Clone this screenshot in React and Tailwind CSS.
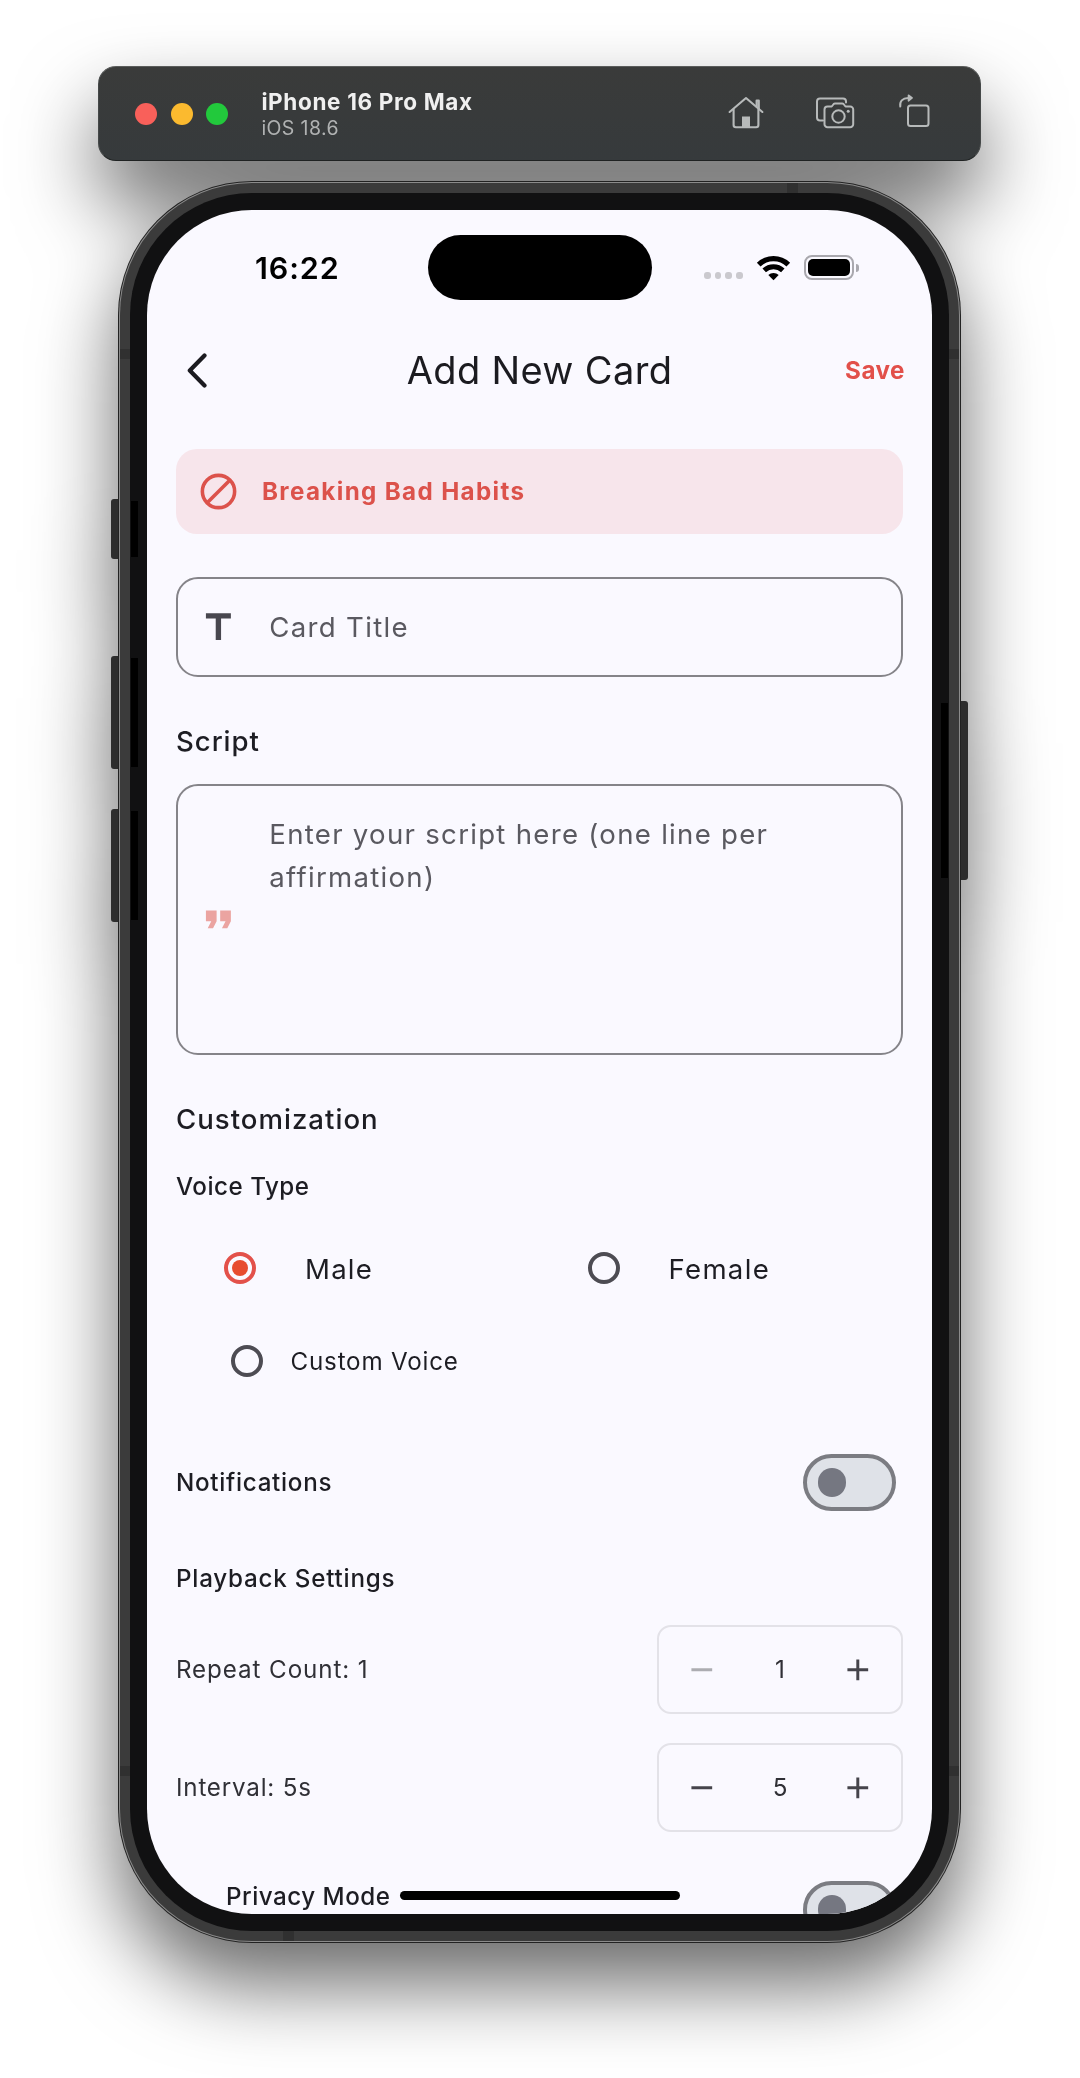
import React from "react";
import { MdAdd, MdBlock, MdFormatQuote, MdRemove, MdTitle } from "react-icons/md";

function HomeIcon() {
  return (
    <svg width="36" height="34" viewBox="728 95 36 34" fill="none" stroke="#b7baba" strokeWidth="2.1" strokeLinecap="round" strokeLinejoin="round">
      <path d="M729.6 112 746 98l16.4 14" />
      <path d="M756.6 106.5V100.6h2.2V109" />
      <path d="M733.6 109.5v15.6a2.2 2.2 0 0 0 2.2 2.2h20.4a2.2 2.2 0 0 0 2.2-2.2v-15.6" />
      <path d="M742 116.5h8v11h-8z" fill="#b7baba" stroke="none" />
    </svg>
  );
}

function ScreenshotIcon() {
  return (
    <svg width="40" height="34" viewBox="815 95 40 34" fill="none" stroke="#b7baba" strokeWidth="2" strokeLinecap="round" strokeLinejoin="round">
      <path d="M823 120.5h-3a3 3 0 0 1-3-3V101.5a3 3 0 0 1 3-3h23a3 3 0 0 1 3 3v1" />
      <path d="M827.5 106.5h4.2l2-2.5a1.8 1.8 0 0 1 1.3-.6h7.2a1.8 1.8 0 0 1 1.3.6l2 2.5h4.7a3 3 0 0 1 3 3v14.7a3 3 0 0 1-3 3h-22.7a3 3 0 0 1-3-3v-14.7a3 3 0 0 1 3-3z" />
      <circle cx="838.5" cy="116.5" r="6.2" />
      <circle cx="848.2" cy="111.3" r="1.5" fill="#b7baba" stroke="none" />
    </svg>
  );
}

function RotateIcon() {
  return (
    <svg width="34" height="34" viewBox="897 94 34 34" fill="none" stroke="#b7baba" strokeWidth="2" strokeLinecap="round" strokeLinejoin="round">
      <rect x="908" y="105.5" width="20.5" height="20.5" rx="2.5" />
      <path d="M900.3 106.5c-.8-5.2 2-8.300 8-8.500" />
      <path d="M908.5 95.200l3.600 2.700-3.600 2.900z" fill="#b7baba" strokeWidth="1.6" />
    </svg>
  );
}

function TitleBar() {
  return (
    <div className="flex h-[95px] w-[883px] items-center rounded-[18px] border border-t-[#5a5c5b] border-r-[#454848] border-b-[#1f2222] border-l-[#454848] bg-linear-to-b from-[#3a3b3a] to-[#363a3c] pl-9">
      <div className="flex gap-[13.7px]">
        <span className="size-[22px] rounded-full bg-[#f9605a]" />
        <span className="size-[22px] rounded-full bg-[#fbba2f]" />
        <span className="size-[22px] rounded-full bg-[#22c93c]" />
      </div>
      <div className="ml-[33px] flex flex-col">
        <span className="text-[22.5px] leading-[28px] font-bold tracking-[0.650px] text-[#f0f0f0]">iPhone 16 Pro Max</span>
        <span className="text-[19.500px] leading-[24px] tracking-[0.400px] text-[#b0b2b2]">iOS 18.6</span>
      </div>
      <div className="mr-[49px] mb-[3px] ml-auto flex items-center">
        <HomeIcon />
        <div className="ml-[51px] flex"><ScreenshotIcon /></div>
        <div className="ml-[42px] flex pb-[2px]"><RotateIcon /></div>
      </div>
    </div>
  );
}

function StatusIcons() {
  return (
    <div className="flex items-center">
      <div className="mt-[16px] flex gap-[4px]">
        <span className="size-[6.7px] rounded-[3px] bg-[#cac9ce]" />
        <span className="size-[6.7px] rounded-[3px] bg-[#cac9ce]" />
        <span className="size-[6.7px] rounded-[3px] bg-[#cac9ce]" />
        <span className="size-[6.7px] rounded-[3px] bg-[#cac9ce]" />
      </div>
      <svg className="ml-[13px]" width="35" height="26" viewBox="-17.5 -25 35 26" fill="none" stroke="#000">
        <path d="M-14.8-15.3a21.3 21.3 0 0 1 29.6 0" strokeWidth="5.3" />
        <path d="M-9.3-9.6a13.4 13.4 0 0 1 18.6 0" strokeWidth="5" />
        <path d="M0 .3-5.2-4.9a7.4 7.4 0 0 1 10.4 0z" fill="#000" stroke="none" />
      </svg>
      <div className="ml-[13px] flex h-[25px] w-[50px] rounded-[8px] border-2 border-[#a9a8ae] p-[2px]">
        <div className="flex-1 rounded-[5px] bg-black" />
      </div>
      <div className="ml-[2px] h-2 w-[3px] rounded-r-full bg-[#a9a8ae]" />
    </div>
  );
}

function StatusBar() {
  return (
    <div className="flex h-[115px] items-center">
      <span className="ml-[108px] w-[173px] text-[30.5px] font-semibold tracking-[0.900px] text-black">16:22</span>
      <div className="h-[65px] w-[224px] rounded-full bg-black" />
      <div className="ml-[52px]"><StatusIcons /></div>
    </div>
  );
}

function Header() {
  return (
    <div className="mt-px grid h-[89px] grid-cols-3 items-center pr-[27px] pl-[39px]">
      <svg width="22" height="36" viewBox="0 0 22 36" fill="none" stroke="#1b1b20" strokeWidth="4.2" strokeLinecap="round" strokeLinejoin="round">
        <path d="M18.5 2.500 3.800 17.500l14.700 15" />
      </svg>
      <h1 className="justify-self-center text-[38px] tracking-[0.350px] whitespace-nowrap text-[#1b1b20] -translate-x-[6px]">Add New Card</h1>
      <button className="justify-self-end pt-[2px] text-[24.2px] font-[650] tracking-[0.500px] text-[#e2504a]">Save</button>
    </div>
  );
}

function Radio({ checked }) {
  if (checked) {
    return (
      <span className="flex size-8 items-center justify-center rounded-full border-4 border-[#e3514a]">
        <span className="size-4 rounded-full bg-[#e74c2f]" />
      </span>
    );
  }
  return <span className="block size-8 rounded-full border-4 border-[#4d4c53]" />;
}

function Switch() {
  return (
    <span className="flex h-[57px] w-[93px] items-center rounded-full border-4 border-[#7b7c82] bg-[#dfe2e8] pl-[10.5px]">
      <span className="size-[28.5px] rounded-full bg-[#757781]" />
    </span>
  );
}

function Stepper({ value, atMin }) {
  return (
    <div className="grid h-[89px] w-[246px] grid-cols-3 items-center justify-items-center rounded-[14px] border-2 border-[#e3e2e8] px-[4px]">
      <MdRemove size={35.6} className={atMin ? "text-[#acacb1]" : "text-[#45444b]"} />
      <span className="pt-[2px] text-[24.2px] text-[#303036]">{value}</span>
      <MdAdd size={35.6} className="text-[#45444b]" />
    </div>
  );
}

function Form() {
  return (
    <div className="flex flex-col px-[29px] pt-[34px] text-[#1d1d23]">
      <div className="flex h-[85px] items-center rounded-[21px] bg-[#f7e5eb] pl-[21px] text-[#dc524b]">
        <svg width="43" height="43" viewBox="0 0 24 24" fill="none" stroke="currentColor" strokeWidth="2">
          <circle cx="12" cy="12" r="9" />
          <path d="M5.700 18.300 18.300 5.700" />
        </svg>
        <span className="ml-[22px] pt-[2px] text-[24.2px] font-[650] tracking-[1.350px]">Breaking Bad Habits</span>
      </div>

      <div className="mt-[43px] flex h-[100px] items-center rounded-[22px] border-2 border-[#858489] pl-[19px]">
        <MdTitle size={42.8} className="text-[#48474f]" />
        <span className="ml-[29.5px] pt-[2px] text-[27.6px] tracking-[1.300px] text-[#5a5960]">Card Title</span>
      </div>

      <h2 className="flex h-[107px] items-center pt-[22px] text-[27.6px] font-medium tracking-[0.950px]">Script</h2>
      <div className="flex h-[271px] items-center rounded-[22px] border-2 border-[#858489] pl-[19px]">
        <MdFormatQuote size={42.8} className="text-[#eba4a1]" />
        <p className="ml-[29.5px] self-start pt-[27px] text-[27.6px] leading-[42.7px] tracking-[1.280px] text-[#5a5960]">
          Enter your script here (one line per
          <br />
          affirmation)
        </p>
      </div>

      <h2 className="flex h-[99px] items-center pt-[31px] text-[27.6px] font-medium tracking-[1px]">Customization</h2>
      <h3 className="flex h-[65px] items-center pt-[2px] text-[24.2px] font-medium tracking-[0.500px]">Voice Type</h3>
      <div className="grid h-[99px] grid-cols-2 items-center">
        <label className="flex items-center pl-[48px]">
          <Radio checked />
          <span className="ml-[49px] pt-[2px] text-[27.6px] tracking-[1.200px]">Male</span>
        </label>
        <label className="flex items-center pl-[48px]">
          <Radio />
          <span className="ml-[49px] pt-[2px] text-[27.6px] tracking-[1.300px]">Female</span>
        </label>
      </div>
      <label className="flex h-[86px] items-center pl-[55px]">
        <Radio />
        <span className="ml-[27.5px] pt-[2px] text-[24.2px] tracking-[0.800px]">Custom Voice</span>
      </label>

      <div className="flex h-[136px] items-center justify-between pt-[21px] pr-[7px]">
        <h3 className="pt-[2px] text-[24.2px] font-medium tracking-[0.700px]">Notifications</h3>
        <Switch />
      </div>

      <h3 className="flex h-[77px] items-center pt-[2px] text-[24.2px] font-medium tracking-[0.780px]">Playback Settings</h3>
      <div className="mt-2 flex items-center justify-between">
        <span className="pt-[2px] text-[24.2px] tracking-[0.900px] text-[#303036]">Repeat Count: 1</span>
        <Stepper value={1} atMin />
      </div>
      <div className="mt-[29px] flex items-center justify-between">
        <span className="pt-[2px] text-[24.2px] tracking-[0.800px] text-[#303036]">Interval: 5s</span>
        <Stepper value={5} />
      </div>
      <div className="mt-[49px] flex items-start justify-between pr-[7px] pl-[50px]">
        <h3 className="pt-px text-[24.2px] leading-[30px] font-medium tracking-[0.500px]">Privacy Mode</h3>
        <Switch />
      </div>
    </div>
  );
}

function Phone() {
  return (
    <div className="relative mt-[20px] h-[1762px] w-[843px]">
      {/* side buttons */}
      <div className="absolute top-[318px] -left-[7px] h-[60px] w-[9px] rounded-l-[3px] bg-[#2d2d2d]" />
      <div className="absolute top-[475px] -left-[7px] h-[113px] w-[9px] rounded-l-[3px] bg-[#2d2d2d]" />
      <div className="absolute top-[628px] -left-[7px] h-[113px] w-[9px] rounded-l-[3px] bg-[#2d2d2d]" />
      <div className="absolute top-[520px] -right-[7px] h-[179px] w-[9px] rounded-r-[3px] bg-[#2d2d2d]" />

      <div className="relative h-full rounded-[134px] bg-[#222222] p-px">
        <div className="h-full rounded-[133px] bg-[#8b8b8b] p-px">
          <div className="h-full rounded-[132px] bg-[#3b3b3b] p-[10px]">
            <div className="h-full rounded-[122px] bg-[#111112] p-[17px]">
              <div className="relative h-full overflow-hidden rounded-[105px] bg-[#faf9ff]">
                <StatusBar />
                <Header />
                <Form />
                <div className="absolute bottom-[14px] left-[253px] h-[9px] w-[280px] rounded-full bg-black" />
              </div>
            </div>
          </div>
        </div>
        {/* antenna bands */}
        <div className="absolute top-[168px] left-[2px] h-[10px] w-[10px] bg-[#303030]" />
        <div className="absolute top-[168px] right-[2px] h-[10px] w-[10px] bg-[#303030]" />
        <div className="absolute bottom-[167px] left-[2px] h-[10px] w-[10px] bg-[#303030]" />
        <div className="absolute right-[2px] bottom-[167px] h-[10px] w-[10px] bg-[#303030]" />
        <div className="absolute top-[2px] left-[669px] h-[10px] w-[11px] bg-[#303030]" />
        <div className="absolute bottom-[2px] left-[165px] h-[10px] w-[11px] bg-[#303030]" />
        {/* button recesses in the bezel */}
        <div className="absolute top-[320px] left-[13px] h-[56px] w-[7px] bg-black" />
        <div className="absolute top-[477px] left-[13px] h-[109px] w-[7px] bg-black" />
        <div className="absolute top-[630px] left-[13px] h-[109px] w-[7px] bg-black" />
        <div className="absolute top-[522px] right-[13px] h-[175px] w-[7px] bg-black" />
      </div>
    </div>
  );
}

export default function App() {
  return (
    <div className="h-[2078px] w-[1080px] overflow-hidden bg-white font-['Inter',sans-serif]">
      <div className="flex w-[1079px] flex-col items-center pt-[66px] drop-shadow-[0_42px_40px_rgba(0,0,0,0.58)]">
        <TitleBar />
        <Phone />
      </div>
    </div>
  );
}
